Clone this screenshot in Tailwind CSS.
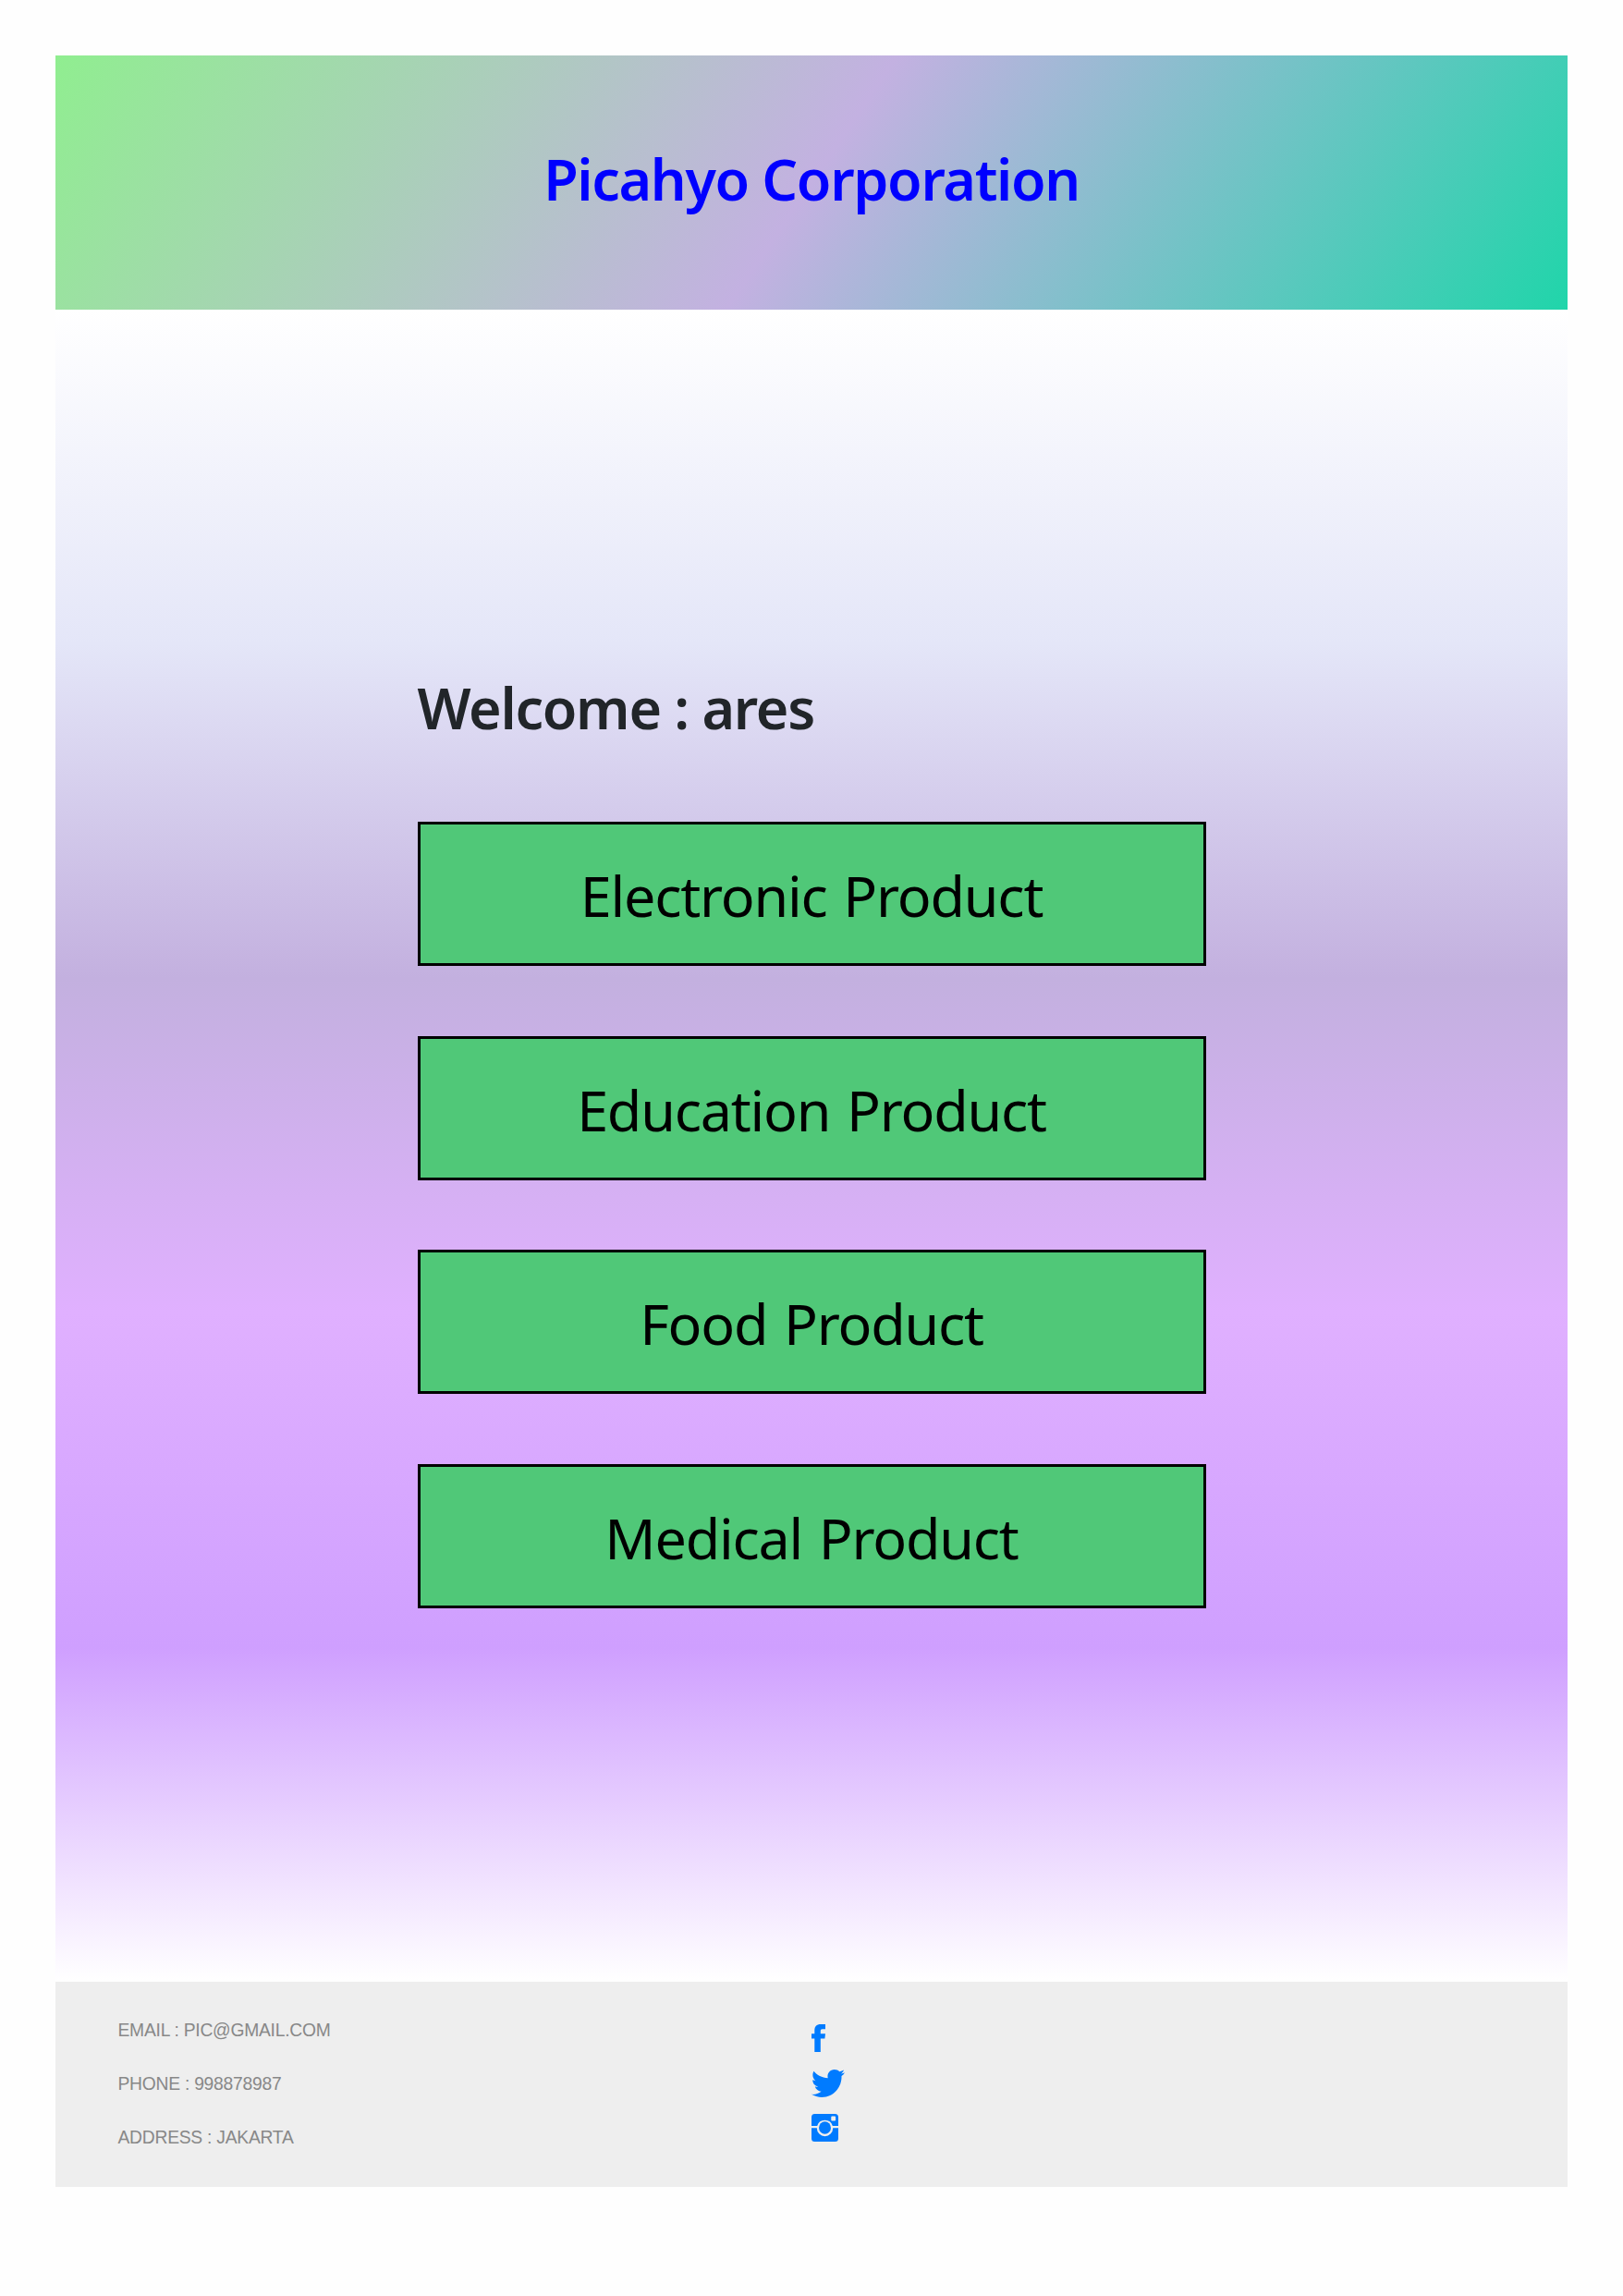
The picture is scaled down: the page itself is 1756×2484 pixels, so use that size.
<!DOCTYPE html>
<html lang="en">
<head>
<meta charset="utf-8">
<title>Picahyo Corporation</title>
<script src="https://cdn.jsdelivr.net/npm/@tailwindcss/browser@4"></script>
</head>
<body class="bg-[#fefefe] px-[60px] pt-[60px] h-[2484px] font-['Noto_Sans',sans-serif]">
<header class="h-[275px] flex justify-center pt-[86px] bg-[linear-gradient(124deg,#90ee90,#c3b1e1,#20d5aa)]">
  <h1 class="h-24 text-[61px] leading-[96px] font-semibold tracking-[-1.35px] text-[#0000ff] whitespace-nowrap"><a href="#">Picahyo Corporation</a></h1>
</header>
<main class="h-[1809px] flex flex-col items-center pt-[383px] bg-[linear-gradient(180deg,#ffffff,#e4e6f8,#c3b0df,#e0b0ff,#cf9fff,#ffffff)]">
  <div class="w-[853px]">
    <h2 class="h-24 text-[61px] leading-[96px] font-semibold tracking-[-1.3px] text-[#212529] whitespace-nowrap">Welcome : ares</h2>
    <nav class="mt-[75px] flex flex-col gap-[75.5px] text-[61px] leading-[96px] tracking-[-1.2px] [word-spacing:3px] text-black text-center whitespace-nowrap">
      <a href="#" class="h-[156px] border-3 border-black bg-[#50c878] pt-[29px]"><span>Electronic Product</span></a>
      <a href="#" class="h-[156px] border-3 border-black bg-[#50c878] pt-[29px]"><span>Education Product</span></a>
      <a href="#" class="h-[156px] border-3 border-black bg-[#50c878] pt-[29px]"><span>Food Product</span></a>
      <a href="#" class="h-[156px] border-3 border-black bg-[#50c878] pt-[29px]"><span>Medical Product</span></a>
    </nav>
  </div>
</main>
<footer class="h-[222px] bg-[#eeeeee] grid grid-cols-2 text-[19.3px] leading-[58px] tracking-[-0.25px] text-[#888888] font-['Liberation_Sans',sans-serif]">
  <div class="pl-[67.5px] pt-[24px] whitespace-nowrap">
    <p>EMAIL : PIC@GMAIL.COM</p>
    <p>PHONE : 998878987</p>
    <p>ADDRESS : JAKARTA</p>
  </div>
  <div class="pt-[46px] flex flex-col items-start text-[#007bff]">
    <a href="#" aria-label="Facebook"><svg class="block w-[15px] h-[30px]" viewBox="0 0 15 30" fill="currentColor"><path d="M3.3 30V15.5H0V10.3H3.3V6.8C3.3 2.2 5.4 0 10 0H15V5.2H11.9C10.1 5.2 9.8 5.9 9.8 7.5V10.3H15L14.4 15.5H9.8V30Z"/></svg></a>
    <a href="#" aria-label="Twitter" class="mt-[19px]"><svg class="block w-[36px] h-[30px]" viewBox="0 0 36 30" fill="currentColor"><path d="M2.4 1.8C6 6.2 11.3 8.9 17.7 9.2C16.5 4 20.2 0 24.8 0C27 0 29 .9 30.3 2.3C32 2 33.600 1.400 35 .5C34.400 2.300 33.300 3.600 31.900 4.500C33.400 4.300 34.800 3.900 36 3.300C35 4.900 33.900 6.100 32.500 7.100C33 18.500 24.500 30 11.200 30C7.100 30 3.200 28.800 0 26.800C4 27.200 7.700 26.100 10.600 23.700C7.400 23.600 4.700 21.500 3.800 18.600C4.900 18.800 6 18.800 7.100 18.500C3.700 17.800 1.200 14.800 1.200 11.300C2.200 11.800 3.300 12.100 4.500 12.200C1.300 9.900 .5 5.500 2.400 1.800Z"/></svg></a>
    <a href="#" aria-label="Instagram" class="mt-[18px]"><svg class="block w-[29px] h-[30px]" viewBox="0 0 30 30" preserveAspectRatio="none" fill="currentColor"><path fill-rule="evenodd" d="M3.500 0H26.500Q30 0 30 3.500V13H23.600A9 9 0 0 0 6.400 13H0V3.500Q0 0 3.500 0ZM23 2.600Q22 2.600 22 3.600V6.600Q22 7.600 23 7.600H26Q27 7.600 27 6.600V3.600Q27 2.600 26 2.600Z"/><path d="M0 15.200H6A9 9 0 0 0 24 15.200H30V26.500Q30 30 26.500 30H3.500Q0 30 0 26.500Z"/><circle cx="15" cy="15" r="6.700"/></svg></a>
  </div>
</footer>
</body>
</html>
